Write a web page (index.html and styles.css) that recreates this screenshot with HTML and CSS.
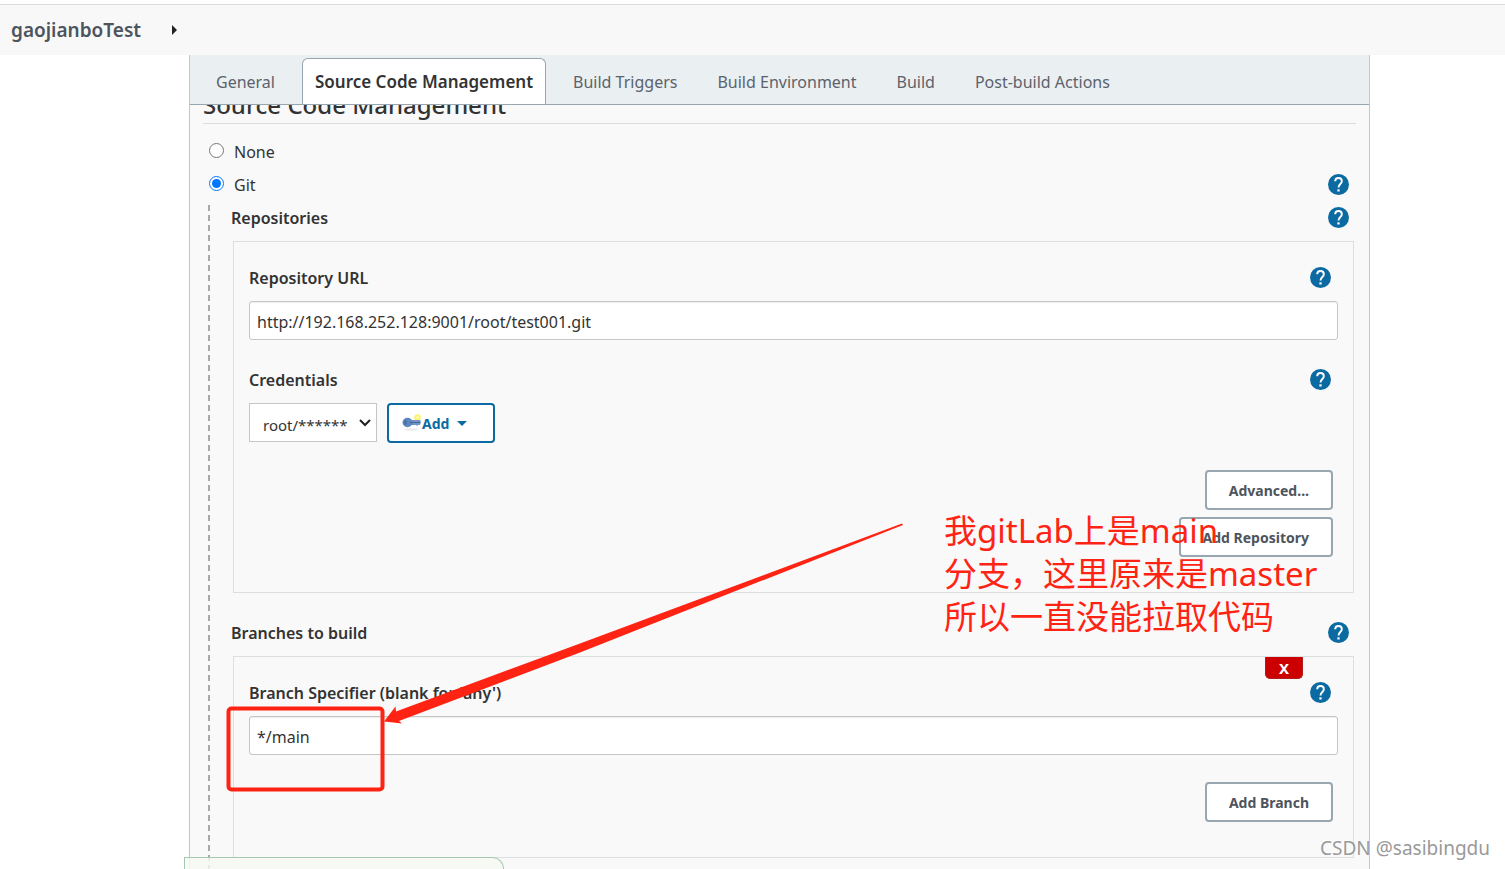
FILE: index.html
```html
<!DOCTYPE html>
<html lang="en">
<head>
<meta charset="utf-8">
<title>gaojianboTest Config</title>
<link rel="stylesheet" href="styles.css">
</head>
<body>
<svg width="0" height="0" class="defs" aria-hidden="true">
  <symbol id="help" viewBox="0 0 24 24"><path fill="#0b6aa2" d="M12 0a12 12 0 1 0 0 24 12 12 0 0 0 0-24z"/><path fill="none" stroke="#fff" stroke-width="2.2" d="M8.2 8.4C8.2 6 9.800 4.600 12 4.600s3.800 1.400 3.800 3.700c0 2.900-3.800 3.400-3.800 7"/><path fill="#fff" d="M10.700 17.500h2.600v2.500h-2.600z"/></symbol>
</svg>
<div class="page">
  <header class="breadcrumbs">
    <a href="#" class="crumb">gaojianboTest</a>
    <svg class="crumb-arrow" viewBox="0 0 5 10"><path fill="#222" d="M0 0l5 5-5 5z"/></svg>
  </header>
  <main class="panel">
    <nav class="tabs">
      <a href="#" class="tab">General</a>
      <a href="#" class="tab active">Source Code Management</a>
      <a href="#" class="tab">Build Triggers</a>
      <a href="#" class="tab">Build Environment</a>
      <a href="#" class="tab">Build</a>
      <a href="#" class="tab">Post-build Actions</a>
    </nav>
    <form class="config">
      <div class="heading-clip"><h2 class="heading">Source Code Management</h2></div>
      <div class="row radio-row first"><input type="radio" name="scm" id="none"><label for="none">None</label></div>
      <div class="row radio-row"><input type="radio" name="scm" id="git" checked><label for="git">Git</label>
        <button type="button" class="help" aria-label="Help for Git"><svg><use href="#help"/></svg></button></div>
      <div class="nested">
        <div class="row"><span class="label">Repositories</span>
          <button type="button" class="help" aria-label="Help for Repositories"><svg><use href="#help"/></svg></button></div>
        <section class="box">
          <div class="row"><label class="label" for="url">Repository URL</label>
            <button type="button" class="help" aria-label="Help for Repository URL"><svg><use href="#help"/></svg></button></div>
          <input class="text" id="url" type="text" value="http://192.168.252.128:9001/root/test001.git">
          <div class="row spaced"><label class="label" for="cred">Credentials</label>
            <button type="button" class="help" aria-label="Help for Credentials"><svg><use href="#help"/></svg></button></div>
          <div class="credentials">
            <div class="select-wrap">
              <select id="cred"><option>root/******</option></select>
              <svg class="chevron" viewBox="0 0 12 8"><path fill="none" stroke="#222" stroke-width="2" d="M1 1l5 5 5-5"/></svg>
            </div>
            <button type="button" class="btn btn-add">
              <svg class="key" viewBox="0 0 20 18"><ellipse cx="9" cy="15.500" rx="7" ry="1.300" fill="#ececec"/><circle cx="15.500" cy="3.500" r="3.300" fill="#fbf36a"/><circle cx="15.500" cy="3.500" r="1.300" fill="#fffbc0"/><path fill="#6f95c9" d="M7 6h11l1 2-1 3h-2l-1 1-1-1H7z"/><ellipse cx="5.500" cy="8.500" rx="5" ry="4.700" fill="#5b86c0"/><ellipse cx="3.500" cy="8.500" rx="1.500" ry="2.500" fill="#4a70a6"/><path stroke="#46658f" d="M8 8.500h10"/></svg>
              Add
              <svg class="caret" viewBox="0 0 10 5"><path fill="#0b6aa2" d="M0 0h10L5 5z"/></svg>
            </button>
          </div>
          <div class="actions"><button type="button" class="btn">Advanced...</button><button type="button" class="btn">Add Repository</button></div>
        </section>
        <div class="row spaced"><span class="label">Branches to build</span>
          <button type="button" class="help" aria-label="Help for Branches to build"><svg><use href="#help"/></svg></button></div>
        <section class="box">
          <button type="button" class="delete">X</button>
          <div class="row"><label class="label" for="branch">Branch Specifier (blank for 'any')</label>
            <button type="button" class="help" aria-label="Help for Branch Specifier"><svg><use href="#help"/></svg></button></div>
          <input class="text" id="branch" type="text" value="*/main">
          <div class="actions"><button type="button" class="btn">Add Branch</button></div>
        </section>
      </div>
    </form>
  </main>
  <div class="save-bar"></div>
  <svg class="marks" width="920" height="820" aria-hidden="true">
    <rect x="228.500" y="708.500" width="154" height="81" rx="3" fill="none" stroke="#ff2314" stroke-width="4"/>
    <path fill="#ff2314" d="M902 523.500L903 525 580 652.500 399 721 402 723.500 384 721.500 395.500 706.500 396 711.500 580 643.500z"/>
  </svg>
  <p class="note" lang="zh">我gitLab上是main<br>分支，这里原来是master<br>所以一直没能拉取代码</p>
  <div class="watermark">CSDN @sasibingdu</div>
</div>
</body>
</html>
```
FILE: styles.css
```css
* { box-sizing: border-box; }
body {
  margin: 0;
  background: #fff;
  color: #333;
  font-family: "Noto Sans", "Open Sans", sans-serif;
  font-size: 16px;
  line-height: 24px;
}
a { text-decoration: none; }
button, input, select { font-family: inherit; color: inherit; margin: 0; }
.defs { position: absolute; }
.page {
  position: relative;
  display: flex;
  flex-direction: column;
  height: 100vh;
  min-height: 869px;
  overflow: hidden;
  padding-top: 4px;
}
.breadcrumbs {
  display: flex;
  align-items: center;
  gap: 31px;
  padding: 13px 11px;
  border-top: 1px solid #d9dbdf;
  background: #f8f8f8;
}
.crumb { font-size: 19px; font-weight: 600; color: #4d545d; }
.crumb-arrow { width: 5px; height: 10px; }
.panel {
  flex: 1;
  margin: 0 135px 0 189px;
  border: solid #c4c7ca;
  border-width: 0 1px;
  background: #f9f9f9;
}
.tabs {
  display: flex;
  align-items: flex-end;
  height: 50px;
  padding: 0 12px;
  background: #eaeff2;
  border-bottom: 1px solid #98a6b0;
}
.tab {
  padding: 11px 20px 10px;
  color: #5c626b;
  white-space: nowrap;
}
.tab:first-child { padding-left: 14px; }
.tab.active {
  margin: 0 7px;
  padding: 11px 12px 10px;
  border: 1px solid #98a6b0;
  border-bottom: 0;
  border-radius: 6px 6px 0 0;
  background: #fff;
  color: #333;
  font-size: 17px;
  font-weight: 600;
}
.config { padding: 0 13px; }
.heading-clip {
  display: flex;
  align-items: flex-end;
  height: 19px;
  overflow: hidden;
  border-bottom: 1px solid #dcdcdc;
}
.heading { margin: 0; font-size: 24px; font-weight: 500; line-height: 36px; }
.row {
  display: flex;
  align-items: center;
  height: 33px;
  padding-bottom: 2px;
}
.first { margin-top: 12px; }
.radio-row input { width: 15px; height: 15px; margin: 0 10px 2px 6px; accent-color: #0075ff; }
.spaced { margin-top: 24px; }
.label { font-weight: 600; }
.help {
  width: 21px;
  height: 21px;
  margin: 0 7px 0 auto;
  padding: 0;
  border: 0;
  background: none;
}
.help svg { display: block; width: 21px; height: 21px; }
.nested {
  padding-left: 28px;
  background: repeating-linear-gradient(#a8a8a8 0 6px, transparent 6px 10px) 5px 3px / 2px 100% no-repeat;
  padding-bottom: 20px;
}
.box {
  position: relative;
  margin: 6px 2px 0;
  padding: 20px 15px 35px;
  border: 1px solid #dcdfe0;
}
.text {
  display: block;
  width: 100%;
  height: 39px;
  margin-top: 6px;
  padding: 3px 7px 0;
  border: 1px solid #c6c6c6;
  border-radius: 3px;
  background: #fff;
  box-shadow: inset 0 1px 1px #eee;
  font-size: 16px;
}
.credentials { display: flex; gap: 10px; margin-top: 6px; }
.select-wrap { position: relative; }
.select-wrap select {
  appearance: none;
  width: 128px;
  height: 39px;
  padding: 5px 13px 0;
  border: 1px solid #c6c6c6;
  border-radius: 0;
  background: #fff;
  font-size: 15px;
}
.chevron { position: absolute; right: 6px; top: 16px; width: 12px; height: 8px; pointer-events: none; }
.btn {
  height: 40px;
  padding: 0 22px;
  border: 2px solid #98a6b0;
  border-radius: 4px;
  background: #fff;
  color: #4d545d;
  font-size: 14px;
  font-weight: 700;
}
.btn-add {
  display: flex;
  align-items: center;
  width: 108px;
  padding: 0 13px;
  border-color: #0b6aa2;
  color: #0b6aa2;
}
.key { width: 20px; height: 18px; }
.caret { width: 10px; height: 5px; margin-left: 8px; }
.actions {
  display: flex;
  flex-direction: column;
  align-items: flex-end;
  gap: 7px;
  margin: 27px 5px 0 0;
}
.delete {
  position: absolute;
  top: 0;
  right: 50px;
  width: 38px;
  height: 22px;
  padding: 0;
  border: 1px solid #b31b1b;
  border-top: 0;
  border-radius: 0 0 5px 5px;
  background: #c00;
  color: #fff;
  font-size: 15px;
  font-weight: 700;
  line-height: 20px;
}
.save-bar {
  position: absolute;
  left: 184px;
  bottom: 0;
  width: 320px;
  height: 12px;
  border: 1px solid #a3c9b1;
  border-bottom: 0;
  border-radius: 0 12px 0 0;
  background: rgba(246, 250, 242, .8);
}
.marks { position: absolute; left: 0; top: 0; pointer-events: none; }
.note {
  position: absolute;
  left: 944px;
  top: 509px;
  margin: 0;
  color: #ff2314;
  font-family: "Noto Sans", "Noto Sans CJK SC", sans-serif;
  font-size: 33px;
  line-height: 43px;
  white-space: nowrap;
}
.watermark {
  position: absolute;
  right: 15px;
  bottom: 9px;
  color: #999;
  font-size: 19px;
  text-shadow: -1px -1px 0 #fff;
}
```
